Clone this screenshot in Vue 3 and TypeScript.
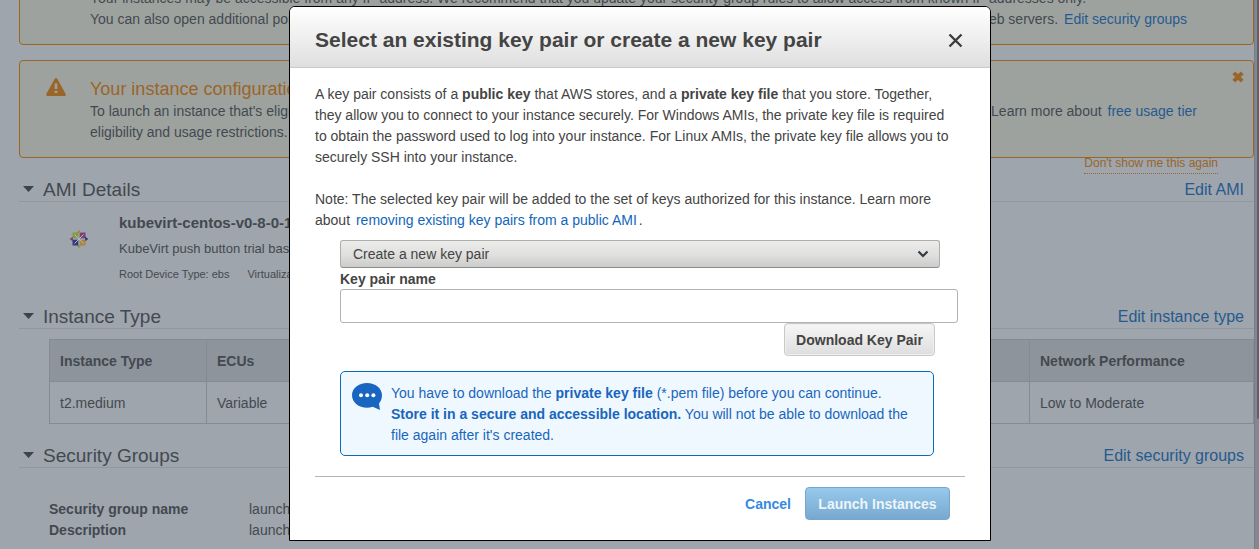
<script setup lang="ts">
import { ref } from 'vue'

const action = ref('create')
const keyName = ref('')
const petals = [0, 90, 180, 270]
const petalColors = ['#7b3f7a', '#ab853c', '#343b80', '#7d9c45']
const tipColors = ['#343b80', '#7d9c45', '#7b3f7a', '#ab853c']
</script>

<template>
  <div class="page">
    <main class="review">
      <section class="alert">
        <div class="alert-icon"></div>
        <div class="alert-text">
          <h2>Improve your instances' security.</h2>
          <p>Your instances may be accessible from any IP address. We recommend that you update your security group rules to allow access from known IP addresses only.</p>
          <p class="split ports"><span>You can also open additional ports in your security group</span><span>to facilitate access to the application or service you're running, e.g., HTTP (80) for web servers. <a href="#">Edit security groups</a></span></p>
        </div>
      </section>

      <section class="alert">
        <div class="alert-icon">
          <svg width="20" height="18" viewBox="0 0 20 18"><path d="M8.6.9Q10-.7 11.400 .9L19.700 16Q20.200 18 18.300 18H1.700Q-.2 18 .3 16Z" fill="#9a6528" /><path d="M8.700 5.500h2.600v5.500H8.700zM8.700 12.700h2.600v2.400H8.700z" fill="#9ea29f" /></svg>
        </div>
        <div class="alert-text">
          <h2>Your instance configuration is not eligible for the free usage tier</h2>
          <p class="split"><span>To launch an instance that's eligible for the free</span><span>usage tier, check your AMI selection. Learn more about <a href="#">free usage tier</a></span></p>
          <p>eligibility and usage restrictions.</p>
        </div>
        <button class="alert-close" aria-label="Dismiss">
          <svg width="12" height="12" viewBox="0 0 12 12"><path d="M1.800 1.800l8.400 8.400M10.200 1.800l-8.400 8.400" stroke="#9a6528" stroke-width="4" /></svg>
        </button>
      </section>
      <div class="dismiss"><a href="#">Don't show me this again</a></div>

      <section>
        <header class="section-head">
          <svg class="caret" width="12" height="6" viewBox="0 0 12 6"><path d="M0 0h11L5.500 6z" fill="#3c434b" /></svg>
          <h3>AMI Details</h3>
          <a href="#">Edit AMI</a>
        </header>
        <div class="ami">
          <svg class="ami-logo" width="20" height="20" viewBox="0 0 20 20">
            <g v-for="(angle, i) in petals" :key="angle" :transform="`rotate(${angle} 10 10)`">
              <path d="M10.700 3.500h5.800v5.800h-5.800z" :fill="petalColors[i]" />
              <path d="M16 7.600L19.300 10 16 12.400z" :fill="tipColors[i]" />
              <path d="M10 10l4.500-4.500" stroke="#b3b7bd" stroke-width="1" />
            </g>
          </svg>
          <div>
            <h4>kubevirt-centos-v0-8-0-1</h4>
            <p class="ami-about">KubeVirt push button trial based</p>
            <p class="ami-meta"><span>Root Device Type: ebs</span><span>Virtualization type: hvm</span></p>
          </div>
        </div>
      </section>

      <section>
        <header class="section-head">
          <svg class="caret" width="12" height="6" viewBox="0 0 12 6"><path d="M0 0h11L5.500 6z" fill="#3c434b" /></svg>
          <h3>Instance Type</h3>
          <a href="#">Edit instance type</a>
        </header>
        <table>
          <thead>
            <tr><th class="col-type">Instance Type</th><th>ECUs</th><th class="col-net">Network Performance</th></tr>
          </thead>
          <tbody>
            <tr><td>t2.medium</td><td>Variable</td><td>Low to Moderate</td></tr>
          </tbody>
        </table>
      </section>

      <section>
        <header class="section-head">
          <svg class="caret" width="12" height="6" viewBox="0 0 12 6"><path d="M0 0h11L5.500 6z" fill="#3c434b" /></svg>
          <h3>Security Groups</h3>
          <a href="#">Edit security groups</a>
        </header>
        <dl>
          <dt>Security group name</dt><dd>launch-wizard</dd>
          <dt>Description</dt><dd>launch-wizard</dd>
        </dl>
      </section>
    </main>
    <div class="scroll-track"><div class="scroll-thumb"></div></div>

    <div class="overlay">
      <div class="modal" role="dialog" aria-modal="true" aria-labelledby="modal-title">
        <header class="modal-head">
          <h1 id="modal-title">Select an existing key pair or create a new key pair</h1>
          <button class="modal-close" aria-label="Close">
            <svg width="15" height="15" viewBox="0 0 15 15"><path d="M1.500 1.500l12 12M13.500 1.500l-12 12" stroke="#3d3d3d" stroke-width="2.400" /></svg>
          </button>
        </header>
        <div class="modal-body">
          <p>A key pair consists of a <b>public key</b> that AWS stores, and a <b>private key file</b> that you store. Together,<br>they allow you to connect to your instance securely. For Windows AMIs, the private key file is required<br>to obtain the password used to log into your instance. For Linux AMIs, the private key file allows you to<br>securely SSH into your instance.</p>
          <p class="note">Note: The selected key pair will be added to the set of keys authorized for this instance. Learn more<br>about <a href="#">removing existing key pairs from a public AMI</a>.</p>
          <form class="key-form" @submit.prevent>
            <div class="select-wrap">
              <select v-model="action" aria-label="Key pair action">
                <option value="create">Create a new key pair</option>
              </select>
              <svg class="chevron" width="12" height="8" viewBox="0 0 12 8"><path d="M1.500 1.500L6 6l4.500-4.500" fill="none" stroke="#333a40" stroke-width="2.200" /></svg>
            </div>
            <label for="key-name">Key pair name</label>
            <input id="key-name" v-model="keyName" type="text" />
            <button class="download" type="button">Download Key Pair</button>
            <div class="info">
              <svg class="bubble" width="30" height="28" viewBox="0 0 30 28">
                <path d="M15 0C23.300 0 30 5.400 30 12.200c0 3.300-1.100 6-3 8.300L28 27l-7.300-3.200C18.900 24.500 17 24.700 15 24.700 6.700 24.700 0 19.200 0 12.200S6.700 0 15 0z" fill="#1866c0" />
                <g fill="#fff"><circle cx="9" cy="12.300" r="2" /><circle cx="15.200" cy="12.300" r="2" /><circle cx="21.400" cy="12.300" r="2" /></g>
              </svg>
              <p>You have to download the <b>private key file</b> (*.pem file) before you can continue.<br><b>Store it in a secure and accessible location.</b> You will not be able to download the<br>file again after it's created.</p>
            </div>
          </form>
          <footer>
            <button class="cancel" type="button">Cancel</button>
            <button class="launch" type="button">Launch Instances</button>
          </footer>
        </div>
      </div>
    </div>
  </div>
</template>

<style>
html, body, #app { height: 100%; }
body { margin: 0; overflow: hidden; background: #9ea5ac; }
</style>

<style scoped>
* { box-sizing: border-box; }
.page {
  display: flex;
  height: 100%;
  overflow: hidden;
  font: 14px/21px "Liberation Sans", Arial, sans-serif;
  color: #434950;
}
h1, h2, h3, h4, p, dl, dd { margin: 0; }
a { color: #265a8e; text-decoration: none; }
button { font: inherit; cursor: pointer; }
svg { display: block; }

.review { flex: 1; min-width: 0; margin-top: -53px; padding-left: 19px; }
.alert {
  display: flex;
  position: relative;
  margin-bottom: 15px;
  height: 98px;
  padding: 16px 26px 14px;
  border: 1px solid #9a6528;
  border-radius: 4px;
  background: #9ea29f;
}
.alert + .dismiss { margin-top: -16px; }
.alert-icon { flex: none; width: 44px; padding-top: 1px; }
.alert-text { flex: 1; min-width: 0; white-space: nowrap; }
.alert h2 { font-size: 18px; line-height: 24px; font-weight: 400; color: #9a6528; }
.alert a { margin-left: 2px; }
.split { display: flex; justify-content: space-between; gap: 16px; padding-right: 30px; }
.ports { padding-right: 40px; }
.alert-close { position: absolute; top: 10px; right: 9px; padding: 0; border: 0; background: none; }
.dismiss { display: flex; justify-content: flex-end; height: 19px; padding-right: 36px; font-size: 12px; line-height: 13px; }
.dismiss a { height: 17px; color: #9a6528; border-bottom: 1px dotted #9a6528; }

.section-head {
  display: flex;
  align-items: center;
  height: 26px;
  padding: 3px 10px 0 4px;
  border-bottom: 1px solid #90979e;
  line-height: 22px;
}
.section-head h3 { flex: 1; margin-left: 8px; font-size: 19px; font-weight: 400; }
.section-head a { font-size: 16px; }
.caret { margin-bottom: 2px; }
.ami { display: flex; height: 101px; padding-top: 10px; }
.ami-logo { margin: 17px 30px 0 50px; }
.ami h4 { font-size: 15px; line-height: 22px; }
.ami-about { margin-top: 4px; font-size: 13px; line-height: 22px; white-space: nowrap; }
.ami-meta { display: flex; gap: 18px; margin-top: 3px; font-size: 11px; line-height: 22px; }

table {
  width: calc(100% - 30px);
  margin: 10px 0 18px 30px;
  border-collapse: collapse;
  table-layout: fixed;
}
th, td { height: 42px; padding: 2px 10px 0; border: 1px solid #848b92; text-align: left; }
th { background: #8d949b; }
.col-type { width: 157px; }
.col-net { width: 224px; }
dl { display: grid; grid-template-columns: 200px 1fr; margin: 31px 0 0 30px; }
dt { font-weight: 700; }

.scroll-track { flex: none; width: 5px; padding-left: 2px; border-left: 1px solid #777e86; background: #81888f; }
.scroll-thumb { height: 419px; border-radius: 0 0 0 2px; background: #59616c; }

.overlay {
  position: absolute;
  inset: 0;
  display: flex;
  justify-content: center;
  align-items: flex-start;
  padding: 6px 0 8px 21px;
}
.modal {
  width: 702px;
  border: 1px solid #000;
  border-radius: 6px 6px 0 0;
  background: #fff;
  color: #444;
}
.modal-head {
  display: flex;
  align-items: center;
  justify-content: space-between;
  height: 61px;
  padding: 6px 27px 0 25px;
  border-bottom: 1px solid #c8c8c8;
  border-radius: 5px 5px 0 0;
  background: linear-gradient(#fff, #dfdfdf);
}
.modal-head h1 { font-size: 21px; line-height: 28px; }
.modal-close { padding: 0; border: 0; background: none; }
.modal-body { padding: 16px 25px 20px; }
.modal a { margin: 0 2px; color: #1166bb; }
.note { margin-top: 21px; }
.key-form { display: flex; flex-direction: column; margin: 9px 7px 20px 25px; }
.select-wrap { position: relative; margin-right: 18px; }
select {
  display: block;
  width: 100%;
  height: 28px;
  padding: 0 12px;
  appearance: none;
  border: 1px solid #adadad;
  border-bottom-color: #8c8c8c;
  border-radius: 3px;
  background: linear-gradient(#ececeb, #dfdfde 55%, #cbcbca);
  font: inherit;
  color: #444;
}
.chevron { position: absolute; top: 10px; right: 11px; pointer-events: none; }
label { height: 21px; padding-top: 1px; font-weight: 700; }
#key-name {
  height: 34px;
  padding: 0 8px;
  border: 1px solid #b2b2b2;
  border-radius: 3px;
  background: #fff;
  font: inherit;
  color: #444;
}
.download {
  align-self: flex-end;
  height: 33px;
  min-width: 151px;
  margin-right: 23px;
  padding: 2px 10px 0;
  border: 1px solid #c9c9c9;
  border-radius: 4px;
  background: linear-gradient(#f6f6f6, #dedede);
  box-shadow: inset 0 0 0 1px #efefef;
  font-weight: 700;
  color: #444;
}
.info {
  display: flex;
  gap: 9px;
  margin: 15px 24px 0 0;
  padding: 11px 11px 9px;
  border: 1px solid #0b6cb5;
  border-radius: 5px;
  background: #f0f8ff;
  color: #1866bd;
}
.bubble { flex: none; }
footer {
  display: flex;
  justify-content: flex-end;
  align-items: center;
  gap: 14px;
  padding: 10px 15px 0 0;
  border-top: 1px solid #b5b5b5;
}
footer button { font-weight: 700; }
.cancel { padding: 2px 0 0; border: 0; background: none; color: #348ae0; }
.launch {
  height: 33px;
  min-width: 145px;
  padding: 2px 10px 0;
  border: 1px solid #76a6cb;
  border-radius: 4px;
  background: linear-gradient(#97c9ec, #78a8cf);
  color: #edf5fb;
}
</style>
